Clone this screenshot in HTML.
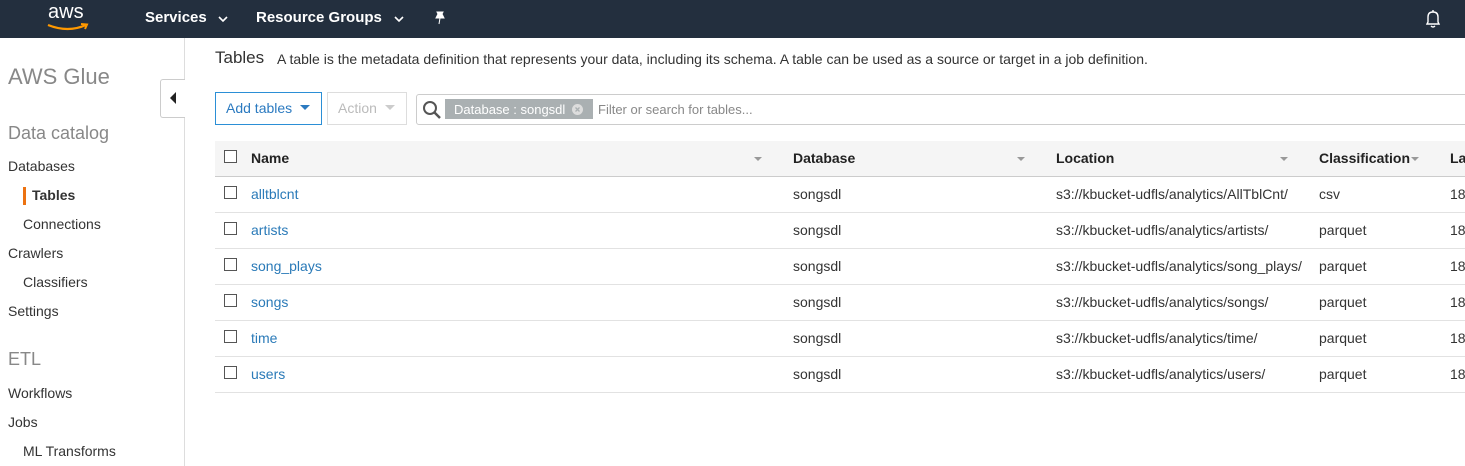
<!DOCTYPE html>
<html><head><style>
*{margin:0;padding:0;box-sizing:border-box}
body{width:1465px;height:466px;overflow:hidden;font-family:"Liberation Sans",Arial,sans-serif;background:#fff;position:relative;color:#333}
.top{position:absolute;left:0;top:0;width:1465px;height:38px;background:#232f3e;color:#fff}
.top .t{position:absolute;top:9px;font-size:15px;font-weight:bold}
.side{position:absolute;left:0;top:38px;width:185px;height:428px;border-right:1px solid #ddd}
.side div{position:absolute;font-size:14px;color:#333;white-space:nowrap}
.a{position:absolute;white-space:nowrap}
.cb{position:absolute;width:13px;height:13px;border:1px solid #555;background:#fff}
.row{position:absolute;left:215px;width:1250px;height:36px;border-bottom:1px solid #e2e2e2;font-size:14px}
.row span{position:absolute;top:9px}
.lnk{color:#2a7ab8}
</style></head><body>
<div class="top">
 <div class="a" style="left:48px;top:1px;font-size:20px;color:#fff;font-weight:normal;letter-spacing:0">aws</div>
 <svg class="a" style="left:46px;top:22px" width="44" height="10"><path d="M2 3 Q22 11 40 3" stroke="#f90" stroke-width="2.2" fill="none"/><path d="M35 2 L41 2.5 L39 7" stroke="#f90" stroke-width="2" fill="none"/></svg>
 <div class="t" style="left:145px">Services</div>
 <svg class="a" style="left:218px;top:16px" width="10" height="7"><path d="M1 1 L5 5 L9 1" stroke="#fff" stroke-width="1.6" fill="none"/></svg>
 <div class="t" style="left:256px">Resource Groups</div>
 <svg class="a" style="left:394px;top:16px" width="10" height="7"><path d="M1 1 L5 5 L9 1" stroke="#fff" stroke-width="1.6" fill="none"/></svg>
 <svg class="a" style="left:434px;top:11px" width="12" height="14"><path d="M3 1 L9 1 L8 3 L10 7 L2 7 L4 3 Z M6 7 L5 13" fill="#fff" stroke="#fff" stroke-width="1"/></svg>
 <svg class="a" style="left:1424px;top:9px" width="18" height="20"><path d="M3 15 L4 13 L4 8 Q4 3 9 3 Q14 3 14 8 L14 13 L15 15 Z" stroke="#fff" stroke-width="1.4" fill="none"/><path d="M9 1 L9 3 M7 17 Q9 19 11 17" stroke="#fff" stroke-width="1.4" fill="none"/></svg>
</div>
<div class="side">
 <div style="left:8px;top:26px;font-size:22px;color:#888">AWS Glue</div>
 <div style="left:8px;top:85px;font-size:18px;color:#888">Data catalog</div>
 <div style="left:8px;top:120px">Databases</div>
 <div style="left:23px;top:149px;width:3px;height:18px;background:#ec7211"></div>
 <div style="left:32px;top:149px;font-weight:bold">Tables</div>
 <div style="left:23px;top:178px">Connections</div>
 <div style="left:8px;top:207px">Crawlers</div>
 <div style="left:23px;top:236px">Classifiers</div>
 <div style="left:8px;top:265px">Settings</div>
 <div style="left:8px;top:311px;font-size:18px;color:#888">ETL</div>
 <div style="left:8px;top:347px">Workflows</div>
 <div style="left:8px;top:376px">Jobs</div>
 <div style="left:23px;top:405px">ML Transforms</div>
</div>
<div class="a" style="left:160px;top:79px;width:25px;height:39px;border:1px solid #ccc;border-right:none;background:#fff;border-radius:3px 0 0 3px"></div>
<svg class="a" style="left:169px;top:92px" width="8" height="12"><path d="M7 0 L1 6 L7 12 Z" fill="#222"/></svg>
<div class="a" style="left:215px;top:48px;font-size:17px;color:#333">Tables</div>
<div class="a" style="left:277px;top:51px;font-size:14px;color:#333">A table is the metadata definition that represents your data, including its schema. A table can be used as a source or target in a job definition.</div>
<div class="a" style="left:215px;top:92px;width:107px;height:33px;border:1px solid #2b8fd6;font-size:14px;color:#2b7ac0;padding:7px 0 0 10px">Add tables</div>
<svg class="a" style="left:300px;top:105px" width="10" height="6"><path d="M0 0 L10 0 L5 5Z" fill="#2b7ac0"/></svg>
<div class="a" style="left:327px;top:92px;width:80px;height:33px;border:1px solid #ddd;font-size:14px;color:#bbb;padding:7px 0 0 10px">Action</div>
<svg class="a" style="left:385px;top:105px" width="10" height="6"><path d="M0 0 L10 0 L5 5Z" fill="#ccc"/></svg>
<div class="a" style="left:416px;top:94px;width:1060px;height:31px;border:1px solid #ccc;border-radius:3px"></div>
<svg class="a" style="left:422px;top:100px" width="20" height="20"><circle cx="8" cy="8" r="6" stroke="#555" stroke-width="2" fill="none"/><path d="M12 12 L18 18" stroke="#555" stroke-width="2.5"/></svg>
<div class="a" style="left:445px;top:99px;width:148px;height:20px;background:#aab0b2;color:#fff;font-size:13px;padding:3px 0 0 9px">Database : songsdl</div>
<svg class="a" style="left:572px;top:104px" width="11" height="11"><circle cx="5.5" cy="5.5" r="5.5" fill="#ddd"/><path d="M3.5 3.5 L7.5 7.5 M7.5 3.5 L3.5 7.5" stroke="#aab0b2" stroke-width="1.3"/></svg>
<div class="a" style="left:598px;top:102px;font-size:13px;color:#888">Filter or search for tables...</div>
<div class="a" style="left:215px;top:141px;width:1250px;height:36px;background:#f5f5f5;border-bottom:1px solid #ccc;font-size:14px;font-weight:bold;color:#222">
 <span class="cb" style="left:9px;top:9px"></span>
 <span class="a" style="left:36px;top:9px">Name</span>
 <span class="a" style="left:578px;top:9px">Database</span>
 <span class="a" style="left:841px;top:9px">Location</span>
 <span class="a" style="left:1104px;top:9px">Classification</span>
 <span class="a" style="left:1235px;top:9px">La</span>
 <svg class="a" style="left:539px;top:16px" width="8" height="5"><path d="M0 0 L8 0 L4 4Z" fill="#999"/></svg>
 <svg class="a" style="left:802px;top:16px" width="8" height="5"><path d="M0 0 L8 0 L4 4Z" fill="#999"/></svg>
 <svg class="a" style="left:1065px;top:16px" width="8" height="5"><path d="M0 0 L8 0 L4 4Z" fill="#999"/></svg>
 <svg class="a" style="left:1196px;top:16px" width="8" height="5"><path d="M0 0 L8 0 L4 4Z" fill="#999"/></svg>
</div>
<div class="row" style="top:177px"><span class="cb" style="left:9px;top:9px"></span><span class="lnk" style="left:36px">alltblcnt</span><span style="left:578px">songsdl</span><span style="left:841px">s3://kbucket-udfls/analytics/AllTblCnt/</span><span style="left:1104px">csv</span><span style="left:1235px">18</span></div>
<div class="row" style="top:213px"><span class="cb" style="left:9px;top:9px"></span><span class="lnk" style="left:36px">artists</span><span style="left:578px">songsdl</span><span style="left:841px">s3://kbucket-udfls/analytics/artists/</span><span style="left:1104px">parquet</span><span style="left:1235px">18</span></div>
<div class="row" style="top:249px"><span class="cb" style="left:9px;top:9px"></span><span class="lnk" style="left:36px">song_plays</span><span style="left:578px">songsdl</span><span style="left:841px">s3://kbucket-udfls/analytics/song_plays/</span><span style="left:1104px">parquet</span><span style="left:1235px">18</span></div>
<div class="row" style="top:285px"><span class="cb" style="left:9px;top:9px"></span><span class="lnk" style="left:36px">songs</span><span style="left:578px">songsdl</span><span style="left:841px">s3://kbucket-udfls/analytics/songs/</span><span style="left:1104px">parquet</span><span style="left:1235px">18</span></div>
<div class="row" style="top:321px"><span class="cb" style="left:9px;top:9px"></span><span class="lnk" style="left:36px">time</span><span style="left:578px">songsdl</span><span style="left:841px">s3://kbucket-udfls/analytics/time/</span><span style="left:1104px">parquet</span><span style="left:1235px">18</span></div>
<div class="row" style="top:357px"><span class="cb" style="left:9px;top:9px"></span><span class="lnk" style="left:36px">users</span><span style="left:578px">songsdl</span><span style="left:841px">s3://kbucket-udfls/analytics/users/</span><span style="left:1104px">parquet</span><span style="left:1235px">18</span></div>
</body></html>
